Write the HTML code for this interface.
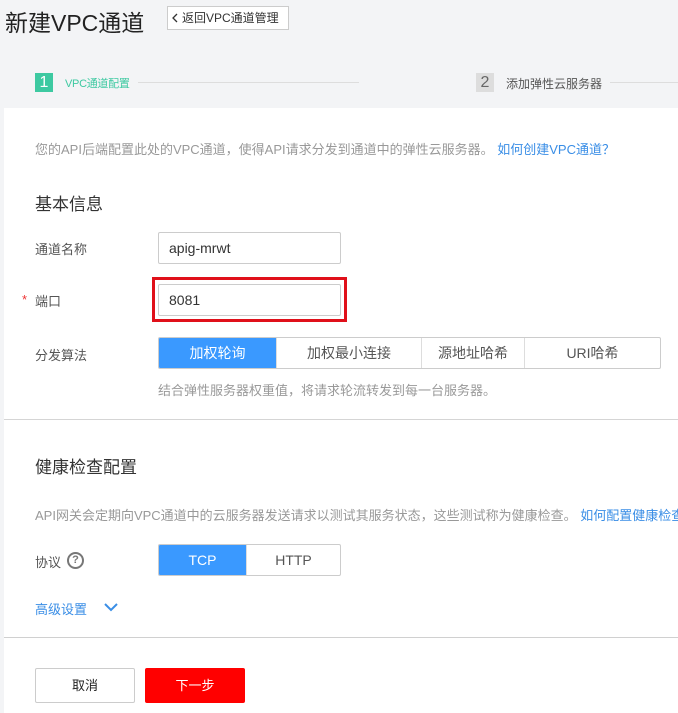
<!DOCTYPE html>
<html><head><meta charset="utf-8"><style>
*{margin:0;padding:0;box-sizing:border-box}
body{width:678px;height:713px;background:#f3f4f6;font-family:"Liberation Sans","Noto Sans CJK SC",sans-serif;position:relative;overflow:hidden;color:#333}
.a{position:absolute;white-space:nowrap}
.panel{position:absolute;left:4px;top:108px;width:674px;height:605px;background:#fff}
.lbl{font-size:13px;color:#555}
.inp{position:absolute;border:1px solid #ccc;border-radius:2px;background:#fff;font-size:14px;color:#333;padding-left:10px}
.seg{position:absolute;display:flex;border:1px solid #ccc;border-radius:2px;overflow:hidden}
.seg div{display:flex;align-items:center;justify-content:center;font-size:14px;color:#555;border-left:1px solid #ddd;height:100%}
.seg div:first-child{border-left:none;background:#3a99ff;color:#fff}
.desc{font-size:13px;color:#999}
</style></head><body>
<div class="a" style="left:5px;top:4px;font-size:23px;color:#222">新建VPC通道</div>
<div class="a" style="left:167px;top:6px;width:122px;height:24px;border:1px solid #ccc;background:#fff;font-size:12px;color:#333;line-height:22px;padding-left:14px">返回VPC通道管理</div>
<svg class="a" style="left:171px;top:13px" width="8" height="10"><path d="M6 1L2 5l4 4" fill="none" stroke="#333" stroke-width="1.3"/></svg>
<div class="a" style="left:35px;top:73px;width:18px;height:19px;background:#3dc9a1;color:#fff;font-size:16px;text-align:center;line-height:19px">1</div>
<div class="a" style="left:65px;top:75px;font-size:11px;color:#3dc9a1;letter-spacing:-0.3px">VPC通道配置</div>
<div class="a" style="left:138px;top:82px;width:221px;height:1px;background:#ddd"></div>
<div class="a" style="left:476px;top:73px;width:18px;height:19px;background:#ddd;color:#666;font-size:16px;text-align:center;line-height:19px">2</div>
<div class="a" style="left:506px;top:75px;font-size:12px;color:#555">添加弹性云服务器</div>
<div class="a" style="left:610px;top:82px;width:68px;height:1px;background:#ddd"></div>
<div class="panel"></div>
<div class="a desc" style="left:35px;top:139px">您的API后端配置此处的VPC通道，使得API请求分发到通道中的弹性云服务器。 <span style="color:#3a8ee6">如何创建VPC通道？</span></div>
<div class="a" style="left:35px;top:190px;font-size:17px;color:#333">基本信息</div>
<div class="a lbl" style="left:35px;top:239px">通道名称</div>
<div class="inp" style="left:158px;top:232px;width:183px;height:32px;line-height:30px">apig-mrwt</div>
<div class="a" style="left:22px;top:292px;font-size:13px;color:#e33">*</div>
<div class="a lbl" style="left:35px;top:291px">端口</div>
<div class="a" style="left:152px;top:277px;width:195px;height:45px;border:3px solid #e0101a"></div>
<div class="inp" style="left:158px;top:284px;width:183px;height:32px;line-height:30px">8081</div>
<div class="a lbl" style="left:35px;top:345px">分发算法</div>
<div class="seg" style="left:158px;top:337px;width:503px;height:32px">
<div style="width:117px">加权轮询</div><div style="width:145px">加权最小连接</div><div style="width:103px">源地址哈希</div><div style="flex:1">URI哈希</div></div>
<div class="a desc" style="left:158px;top:380px">结合弹性服务器权重值，将请求轮流转发到每一台服务器。</div>
<div class="a" style="left:4px;top:419px;width:674px;height:1px;background:#d5d5d5"></div>
<div class="a" style="left:35px;top:453px;font-size:17px;color:#333">健康检查配置</div>
<div class="a desc" style="left:35px;top:505px">API网关会定期向VPC通道中的云服务器发送请求以测试其服务状态，这些测试称为健康检查。 <span style="color:#3a8ee6">如何配置健康检查</span></div>
<div class="a lbl" style="left:35px;top:552px">协议</div>
<div class="a" style="left:67px;top:552px;width:17px;height:17px;border:2px solid #777;border-radius:50%;font-size:11px;font-weight:bold;color:#777;text-align:center;line-height:13px">?</div>
<div class="seg" style="left:158px;top:544px;width:183px;height:32px"><div style="width:87px">TCP</div><div style="flex:1">HTTP</div></div>
<div class="a" style="left:35px;top:599px;font-size:13px;color:#3a8ee6">高级设置</div>
<svg class="a" style="left:103px;top:601px" width="16" height="12"><path d="M2 3l6 6 6-6" fill="none" stroke="#3a8ee6" stroke-width="2"/></svg>
<div class="a" style="left:4px;top:637px;width:674px;height:1px;background:#d0d0d0"></div>
<div class="a" style="left:35px;top:668px;width:100px;height:35px;border:1px solid #ccc;border-radius:2px;font-size:13px;color:#222;text-align:center;line-height:33px">取消</div>
<div class="a" style="left:145px;top:668px;width:100px;height:35px;background:#f00;border-radius:2px;font-size:13px;color:#fff;text-align:center;line-height:35px">下一步</div>
</body></html>
